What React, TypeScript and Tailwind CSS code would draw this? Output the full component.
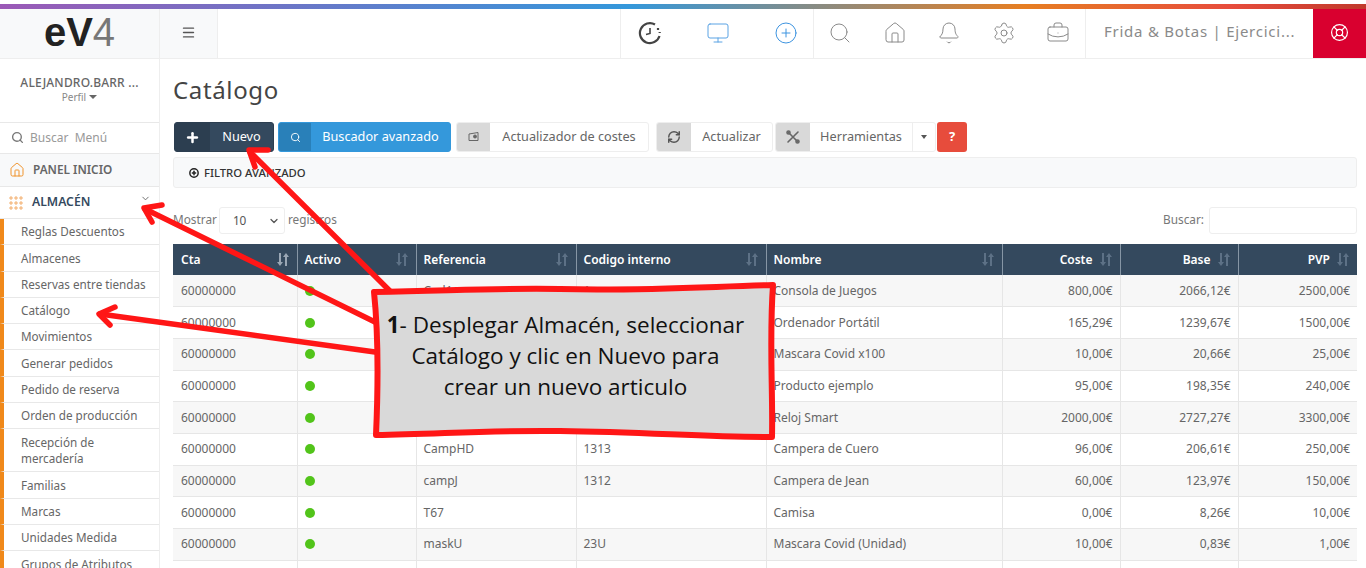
import React from 'react';
import {
  Bell,
  BriefcaseBusiness,
  ChevronDown,
  CirclePlus,
  House,
  LifeBuoy,
  Menu,
  Monitor,
  Plus,
  RefreshCw,
  Search,
  Settings,
} from 'lucide-react';

const menuItems = [
  'Reglas Descuentos',
  'Almacenes',
  'Reservas entre tiendas',
  'Catálogo',
  'Movimientos',
  'Generar pedidos',
  'Pedido de reserva',
  'Orden de producción',
  'Recepción de mercadería',
  'Familias',
  'Marcas',
  'Unidades Medida',
  'Grupos de Atributos',
];

const rows = [
  ['Cod1', '1', 'Consola de Juegos', '800,00€', '2066,12€', '2500,00€'],
  ['', '', 'Ordenador Portátil', '165,29€', '1239,67€', '1500,00€'],
  ['', '', 'Mascara Covid x100', '10,00€', '20,66€', '25,00€'],
  ['', '', 'Producto ejemplo', '95,00€', '198,35€', '240,00€'],
  ['', '', 'Reloj Smart', '2000,00€', '2727,27€', '3300,00€'],
  ['CampHD', '1313', 'Campera de Cuero', '96,00€', '206,61€', '250,00€'],
  ['campJ', '1312', 'Campera de Jean', '60,00€', '123,97€', '150,00€'],
  ['T67', '', 'Camisa', '0,00€', '8,26€', '10,00€'],
  ['maskU', '23U', 'Mascara Covid (Unidad)', '10,00€', '0,83€', '1,00€'],
  ['', '', '', '', '', ''],
];

const SortIcon: React.FC<{active?: boolean}> = ({active}) => (
  <svg width="14" height="13" viewBox="0 0 14 13" className={active ? 'text-[#9aa7b5]' : 'text-[#5d7186]'} fill="currentColor">
    <path d="M3 0h2v9h2l-3 4-3-4h2zM9 13h2V4h2l-3-4-3 4h2z" />
  </svg>
);

const ToolButton: React.FC<{
  icon: React.ReactNode;
  label: string;
  iconWidth: string;
  width: string;
  outer: string;
  iconBg: string;
  text: string;
}> = ({icon, label, iconWidth, width, outer, iconBg, text}) => (
  <div className={`flex h-[30px] shrink-0 overflow-hidden rounded-[3px] border ${width} ${outer}`}>
    <div className={`flex shrink-0 items-center justify-center ${iconWidth} ${iconBg}`}>{icon}</div>
    <div className={`flex flex-1 items-center justify-center text-[12.7px] ${text}`}>{label}</div>
  </div>
);

const Annotation = () => (
  <div className="pointer-events-none absolute inset-0">
    <svg width="1366" height="568" viewBox="0 0 1366 568" fill="none">
      <g stroke="#ff1616" strokeWidth="5.5" strokeLinecap="round" strokeLinejoin="round">
        <path d="M395 296 250 152" />
        <path d="M268 150H249L255 167" />
        <path d="M375 322 145 209" />
        <path d="M162 205 144 208 152 222" />
        <path d="M375 352 100 314" />
        <path d="M115 307 99 314 110 325" />
      </g>
      <path
        d="M374 292C470 290 500 288 560 289C640 291 700 287 773 285C769 340 773 390 772 437C700 437 650 432 560 431C490 430 440 434 376 435C378 390 379 340 374 292Z"
        fill="#d9d9d9"
        stroke="#ff1616"
        strokeWidth="6"
        strokeLinejoin="round"
      />
    </svg>
    <div className="absolute left-[378px] top-[309px] w-[375px] text-center font-['Open_Sans',sans-serif] text-[22.5px] leading-[31px] text-[#111]">
      <b>1</b>- Desplegar Almacén, seleccionar
      <br />
      Catálogo y clic en Nuevo para
      <br />
      crear un nuevo articulo
    </div>
  </div>
);

export default function App() {
  return (
    <div className="relative h-[568px] w-[1366px] overflow-hidden bg-white font-['Noto_Sans',sans-serif] text-[#666]">
      <div className="mt-1 h-[5px] bg-[linear-gradient(90deg,#9b59b6_0%,#3498db_46%,#e67e22_75%,#e74c3c_90%,#c0392b_100%)]" />

      <header className="flex h-[50px] border-b border-[#eee]">
        <div className="flex w-[160px] shrink-0 items-center justify-center border-r border-[#eee] bg-[#f8f9fa] pb-[3px] font-['Liberation_Sans',sans-serif] text-[40px] font-bold leading-none text-[#222]">
          eV<span className="font-normal text-[#777]">4</span>
        </div>
        <div className="flex w-[58px] shrink-0 items-center justify-center border-r border-[#eee] bg-[#f8f9fa] pb-[2px]">
          <Menu size={15} strokeWidth={2.2} className="text-[#555]" />
        </div>
        <div className="flex-1" />
        <div className="flex w-[194px] items-center gap-[44px] border-x border-[#eee] pb-[2px] pl-[17px]">
          <svg width="24" height="24" viewBox="0 0 24 24" fill="none" stroke="#444" strokeWidth="2.2">
            <path d="M17 3.5A10 10 0 1 0 21.5 15" />
            <path d="M20 7v2M21.7 11v1" strokeDasharray="2 1" />
            <path d="M12 7v5.5l-4 1" strokeWidth="1.6" />
          </svg>
          <Monitor size={24} strokeWidth={1} className="text-[#5ba3e4]" />
          <CirclePlus size={24} strokeWidth={1} className="text-[#3d94e0]" />
        </div>
        <div className="flex w-[272px] items-center gap-[30.5px] border-r border-[#eee] pb-[2px] pl-[14px] text-[#8a8a8a]">
          <Search size={24} strokeWidth={1} />
          <House size={24} strokeWidth={1} />
          <Bell size={24} strokeWidth={1} />
          <Settings size={24} strokeWidth={1} />
          <BriefcaseBusiness size={24} strokeWidth={1} />
        </div>
        <div className="flex w-[227px] items-center whitespace-nowrap pb-[4px] pl-[18px] text-[15px] tracking-[0.75px] text-[#8a8a8a]">
          Frida &amp; Botas | Ejercici...
        </div>
        <div className="flex w-[53px] items-center justify-center bg-[#d9002f] pb-[2px]">
          <LifeBuoy size={19} strokeWidth={1.5} className="text-white" />
        </div>
      </header>

      <div className="flex">
        <aside className="w-[160px] shrink-0 border-r border-[#eee] text-[12px]">
          <div className="flex h-[64px] flex-col items-center border-b border-[#e8e8e8] pt-[16px]">
            <div className="text-[12px] font-medium leading-[15px] tracking-[0.2px] text-[#666]">ALEJANDRO.BARR ...</div>
            <div className="flex items-center gap-[3px] text-[10px] leading-[14px] text-[#888]">
              Perfil <span className="h-0 w-0 border-x-[4px] border-t-[4px] border-x-transparent border-t-[#666]" />
            </div>
          </div>
          <div className="flex h-[31px] items-center gap-[6px] border-b border-[#e8e8e8] pb-[1px] pl-[11px] text-[12px] text-[#999]">
            <Search size={13} strokeWidth={2.5} className="text-[#777]" />
            Buscar&nbsp; Menú
          </div>
          <div className="flex h-[33px] items-center gap-[8px] border-b border-[#e8e8e8] bg-[#f8f9fa] pl-[9px] text-[11.8px] font-semibold text-[#666]">
            <House size={16} strokeWidth={1.5} className="text-[#f0932b]" />
            PANEL INICIO
          </div>
          <div className="relative flex h-[32px] items-center gap-[9px] border-b border-[#e8e8e8] pl-[9px] text-[12.2px] font-semibold text-[#34495e]">
            <svg width="14" height="14" viewBox="0 0 14 14" fill="none" stroke="#f0a050" strokeWidth="0.8">
              <path d="M1 1h2v2H1zM6 1h2v2H6zM11 1h2v2h-2zM1 6h2v2H1zM6 6h2v2H6zM11 6h2v2h-2zM1 11h2v2H1zM6 11h2v2H6zM11 11h2v2h-2z" />
            </svg>
            ALMACÉN
            <ChevronDown size={11} className="absolute right-[8px] top-[6px] text-[#666]" />
          </div>
          {menuItems.map((item) => (
            <div
              key={item}
              className="border-b border-l-[4px] border-b-[#e8e8e8] border-l-[#f0891a] py-[4.3px] pl-[17px] pr-2 text-[11.7px] leading-[16.7px] text-[#666]"
            >
              {item}
            </div>
          ))}
        </aside>

        <main className="min-w-0 flex-1 pl-[13px] pr-[9px]">
          <h1 className="pt-[16px] text-[24px] leading-[30px] tracking-[0.65px] text-[#444]">Catálogo</h1>
          <div className="mt-[17px] flex h-[30px] items-center">
            <ToolButton
              icon={<Plus size={15} strokeWidth={4} className="text-white" />}
              label="Nuevo"
              width="w-[100px] ml-[1px]"
              iconWidth="w-[35px]"
              outer="border-[#2c3e50] bg-[#34495e]"
              iconBg="bg-[#2c3e50]"
              text="text-white"
            />
            <ToolButton
              icon={<Search size={11} className="text-white" />}
              label="Buscador avanzado"
              width="w-[173px] ml-[4px]"
              iconWidth="w-[32px]"
              outer="border-[#3498db] bg-[#3498db]"
              iconBg="bg-[#2980b9]"
              text="text-white"
            />
            <ToolButton
              icon={
                <svg width="14" height="12" viewBox="0 0 14 12" fill="none" stroke="#666">
                  <path d="M2 3 11 1.5V9.5H2Z" />
                  <circle cx="8" cy="5.5" r="1.5" fill="#666" />
                </svg>
              }
              label="Actualizador de costes"
              width="w-[193px] ml-[5px]"
              iconWidth="w-[33px]"
              outer="border-[#eee] bg-white"
              iconBg="bg-[#d9d9d9]"
              text="text-[#666]"
            />
            <ToolButton
              icon={<RefreshCw size={14} strokeWidth={2.5} className="text-[#555]" />}
              label="Actualizar"
              width="w-[117px] ml-[7px]"
              iconWidth="w-[34px]"
              outer="border-[#eee] bg-white"
              iconBg="bg-[#d9d9d9]"
              text="text-[#666]"
            />
            <div className="ml-[2px] flex h-[30px] w-[161px] overflow-hidden rounded-[3px] border border-[#eee]">
              <div className="flex w-[34px] items-center justify-center bg-[#d9d9d9]">
                <svg width="14" height="14" viewBox="0 0 14 14" fill="none" stroke="#666" strokeWidth="1.6" strokeLinecap="round">
                  <path d="M2 2 12 12M12 2 2 12" />
                  <circle cx="2.5" cy="2.5" r="1.5" />
                  <circle cx="11.5" cy="11.5" r="1.5" />
                </svg>
              </div>
              <div className="flex flex-1 items-center justify-center text-[12.7px]">Herramientas</div>
              <div className="flex w-[23px] items-center justify-center border-l border-[#eee]">
                <span className="h-0 w-0 border-x-[3px] border-t-[4px] border-x-transparent border-t-[#555]" />
              </div>
            </div>
            <div className="ml-[1px] flex h-[30px] w-[30px] items-center justify-center rounded-[3px] bg-[#e74c3c] text-[13px] font-bold text-white">
              ?
            </div>
          </div>
          <div className="mt-[5px] flex h-[31px] items-center gap-[5px] rounded-[3px] border border-[#eee] bg-[#f8f9fa] pl-[15px] pt-[1px] text-[11.3px] font-medium text-[#333]">
            <CirclePlus size={10} strokeWidth={3.5} className="text-[#222]" />
            FILTRO AVANZADO
          </div>

          <div className="mt-[19px] flex h-[27px] items-center pb-[2px] text-[11.8px] text-[#777]">
            Mostrar
            <div className="ml-[2px] mt-[2px] flex h-[27px] w-[66px] items-center justify-between rounded-[3px] border border-[#eee] pl-[13px] pr-[4px] text-[#555]">
              10 <ChevronDown size={12} strokeWidth={2.5} />
            </div>
            <span className="ml-[3px]">registros</span>
            <span className="ml-auto mr-[5px]">Buscar:</span>
            <div className="mt-[2px] h-[27px] w-[148px] rounded-[3px] border border-[#eee]" />
          </div>

          <table className="mt-[10px] w-[1184px] table-fixed border-collapse text-[12px]">
            <colgroup>
              <col className="w-[124px]" />
              <col className="w-[119px]" />
              <col className="w-[160px]" />
              <col className="w-[190px]" />
              <col className="w-[236px]" />
              <col className="w-[118px]" />
              <col className="w-[118px]" />
              <col className="w-[119px]" />
            </colgroup>
            <thead>
              <tr className="h-[31px] bg-[#34495e] text-left font-semibold text-white">
                {['Cta', 'Activo', 'Referencia', 'Codigo interno', 'Nombre'].map((h, i) => (
                  <th key={h} className="border-r border-[#8696a5] px-[7px] font-semibold first:pl-[8px]">
                    <div className="flex items-center justify-between">
                      {h}
                      <SortIcon active={i === 0} />
                    </div>
                  </th>
                ))}
                {['Coste', 'Base', 'PVP'].map((h) => (
                  <th key={h} className="border-r border-[#8696a5] px-[7px] font-semibold last:border-r-0">
                    <div className="flex items-center justify-end gap-[6px]">
                      {h}
                      <SortIcon />
                    </div>
                  </th>
                ))}
              </tr>
            </thead>
            <tbody>
              {rows.map((r, i) => (
                <tr key={i} className={`h-[31.7px] border-b border-[#e6e6e6] ${i % 2 === 0 ? 'bg-[#f7f7f7]' : 'bg-white'}`}>
                  <td className="border-r border-[#e6e6e6] pl-[8px] pr-[7px]">{r[2] ? '60000000' : ''}</td>
                  <td className="border-r border-[#e6e6e6] px-[7px]">
                    {r[2] && <span className="block h-[10px] w-[10px] rounded-full bg-[#52c41a]" />}
                  </td>
                  <td className="border-r border-[#e6e6e6] px-[7px]">{r[0]}</td>
                  <td className="border-r border-[#e6e6e6] px-[7px]">{r[1]}</td>
                  <td className="border-r border-[#e6e6e6] px-[7px]">{r[2]}</td>
                  <td className="border-r border-[#e6e6e6] px-[7px] text-right">{r[3]}</td>
                  <td className="border-r border-[#e6e6e6] px-[7px] text-right">{r[4]}</td>
                  <td className="px-[7px] text-right">{r[5]}</td>
                </tr>
              ))}
            </tbody>
          </table>
        </main>
      </div>

      <Annotation />
    </div>
  );
}
